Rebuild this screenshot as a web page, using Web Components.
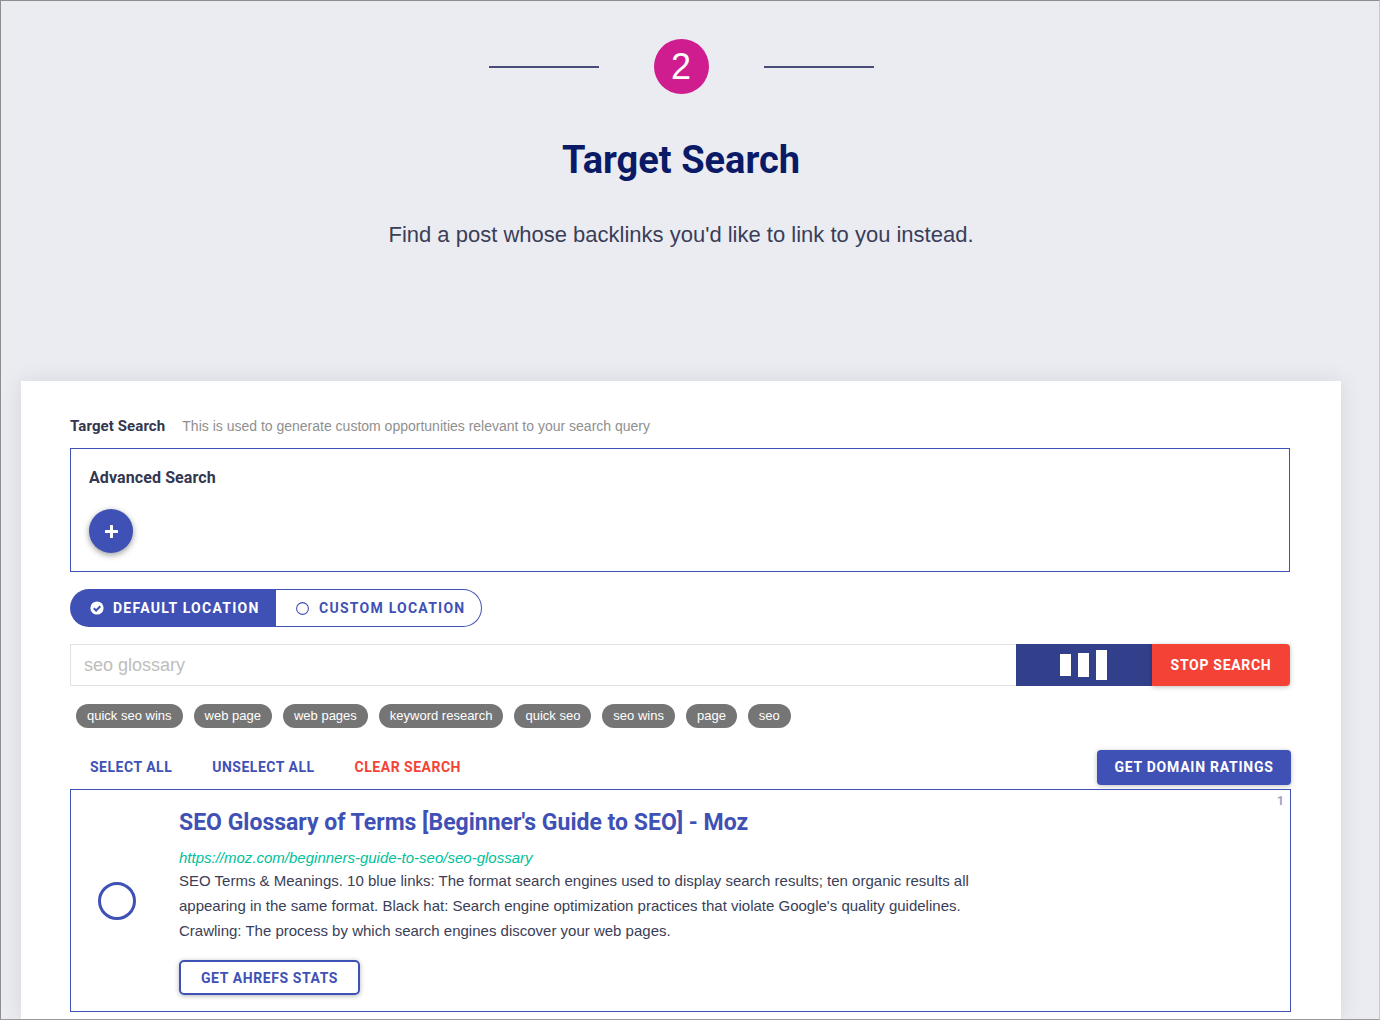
<!DOCTYPE html>
<html><head><meta charset="utf-8">
<style>
html,body{margin:0;padding:0;height:1020px;overflow:hidden;background:#ebecf1}
body{font-family:"Liberation Sans",Arial,sans-serif}
</style></head><body>
<app-frame>
  <step-header num="2" title="Target Search" sub="Find a post whose backlinks you'd like to link to you instead."></step-header>
  <main-card>
    <field-label name="Target Search" hint="This is used to generate custom opportunities relevant to your search query"></field-label>
    <advanced-box></advanced-box>
    <location-toggle></location-toggle>
    <search-row value="seo glossary"></search-row>
    <tag-list tags="quick seo wins|web page|web pages|keyword research|quick seo|seo wins|page|seo"></tag-list>
    <action-bar></action-bar>
    <result-card num="1" heading="SEO Glossary of Terms [Beginner's Guide to SEO] - Moz" url="https://moz.com/beginners-guide-to-seo/seo-glossary">SEO Terms &amp; Meanings. 10 blue links: The format search engines used to display search results; ten organic results all appearing in the same format. Black hat: Search engine optimization practices that violate Google's quality guidelines. Crawling: The process by which search engines discover your web pages.</result-card>
  </main-card>
</app-frame>
<script>
function def(name,css,html){
  customElements.define(name,class extends HTMLElement{
    connectedCallback(){
      if(this.shadowRoot)return;
      const s=this.attachShadow({mode:'open'});
      const a=n=>(this.getAttribute(n)||'');
      s.innerHTML='<style>'+css+'</style>'+(typeof html==='function'?html(a):html);
    }
  });
}
const esc=t=>t.replace(/&/g,'&amp;').replace(/</g,'&lt;');
def('app-frame',`:host{display:flex;flex-direction:column;box-sizing:border-box;width:1380px;height:1020px;overflow:hidden;background:#ebecf1;border:1px solid #8e8e8e;border-bottom-color:#9a9a9a;border-right-color:#c9cad0;padding:0 38px 0 20px}`,`<slot></slot>`);
def('step-header',`
:host{display:flex;flex-direction:column;align-items:center;height:380px;box-sizing:border-box;padding-top:38px;color:#3a3e58}
.top{display:flex;align-items:center;gap:55px;height:55px;margin-left:0}
.line{width:110px;height:2px;background:#474c78;margin-top:0}
.c{width:55px;height:55px;border-radius:50%;background:#cf1c8f;color:#fff;display:flex;align-items:center;justify-content:center;font:400 36px/1 "Liberation Sans",Arial,sans-serif}
h1{margin:44px 0 0;font:700 38px/44px Roboto,sans-serif;color:#0a1a66;letter-spacing:0}
p{margin:39px 0 0;font:400 22px/28px "Liberation Sans",Arial,sans-serif;color:#3a3e58}
`,a=>`<div class="top"><div class="line"></div><div class="c">${a('num')}</div><div class="line"></div></div><h1>${a('title')}</h1><p>${a('sub')}</p>`);
def('main-card',`:host{display:block;flex:1;background:#fff;padding:34px 51px 0 49px;box-shadow:0 0 22px rgba(0,0,0,.09);min-height:0}`,`<slot></slot>`);
def('field-label',`
:host{display:flex;align-items:baseline;gap:17px;height:33px;line-height:22px}
b{font:700 15px/22px Roboto,"Liberation Sans",sans-serif;color:#333750;letter-spacing:.1px}
span{font:400 14px/22px "Liberation Sans",Arial,sans-serif;color:#8f8f8f}
`,a=>`<b>${a('name')}</b><span>${a('hint')}</span>`);
def('advanced-box',`
:host{display:block;box-sizing:border-box;height:124px;border:1px solid #3f51b5;padding:18px 18px 0}
b{display:block;font:700 16px/22px "Roboto",sans-serif;color:#333750;letter-spacing:.1px}
.fab{width:44px;height:44px;border-radius:50%;background:#3f51b5;margin-top:20px;display:flex;align-items:center;justify-content:center;box-shadow:0 2px 6px rgba(0,0,0,.4)}
`,`<b>Advanced Search</b><div class="fab"><svg width="13" height="13" viewBox="0 0 13 13"><path d="M6.5 1v11M1 6.5h11" stroke="#fff" stroke-width="3" stroke-linecap="round"/></svg></div>`);
def('location-toggle',`
:host{display:flex;width:412px;height:38px;margin-top:17px;font:700 14px/1 Roboto,sans-serif;letter-spacing:1.25px}
div{display:flex;align-items:center;box-sizing:border-box}
.on{width:206px;background:#3f51b5;color:#fff;border-radius:19px 0 0 19px;padding-left:20px;gap:9px}
.off{flex:1;border:1px solid #3f51b5;border-left:0;color:#3f51b5;border-radius:0 19px 19px 0;padding-left:20px;gap:10px}
svg{display:block}
`,`<div class="on"><svg width="14" height="14" viewBox="0 0 14 14"><circle cx="7" cy="7" r="6.6" fill="#fff"/><path d="M3.8 7.2l2.3 2.3 4.2-4.3" fill="none" stroke="#3f51b5" stroke-width="2"/></svg>DEFAULT LOCATION</div><div class="off"><svg width="13" height="13" viewBox="0 0 13 13"><circle cx="6.5" cy="6.5" r="5.9" fill="none" stroke="#3f51b5" stroke-width="1.1"/></svg>CUSTOM LOCATION</div>`);
def('search-row',`
:host{display:flex;height:42px;margin-top:17px}
.in{flex:1;box-sizing:border-box;border:1px solid #e2e2e2;border-right:0;padding:0 13px;font:400 18px/40px "Liberation Sans",Arial,sans-serif;color:#bdbdbd}
.bars{width:136px;background:#32408c;display:flex;align-items:center;justify-content:center;gap:7px;padding-right:1px;box-sizing:border-box}
.bars i{display:block;width:11px;background:#fff}
.bars i:nth-child(1){height:22px;margin-top:0}
.bars i:nth-child(2){height:24px}
.bars i:nth-child(3){height:30px}
.stop{width:138px;background:#f44336;color:#fff;border-radius:0 4px 4px 0;display:flex;align-items:center;justify-content:center;font:700 14px/1 Roboto,sans-serif;letter-spacing:.7px;box-shadow:0 1px 5px rgba(0,0,0,.25);position:relative}
`,a=>`<div class="in">${a('value')}</div><div class="bars"><i></i><i></i><i></i></div><div class="stop">STOP SEARCH</div>`);
def('tag-list',`
:host{display:flex;gap:11px;margin-top:18px;padding-left:6px}
span{display:block;height:24px;box-sizing:border-box;padding:0 11px;border-radius:12px;background:#757575;color:#fff;font:400 13px/24px "Liberation Sans",Arial,sans-serif}
`,a=>a('tags').split('|').map(t=>`<span>${t}</span>`).join(''));
def('action-bar',`
:host{display:flex;align-items:center;height:36px;margin-top:21px;font:700 14px/1 Roboto,sans-serif;letter-spacing:.5px;padding-left:20px;margin-right:-1px}
a{color:#3f51b5;margin-right:40px}
a.r{color:#f44336}
.btn{margin-left:auto;height:35px;width:194px;display:flex;align-items:center;justify-content:center;background:#3f51b5;color:#fff;border-radius:4px;box-shadow:0 1px 5px rgba(0,0,0,.25);letter-spacing:.75px}
`,`<a>SELECT ALL</a><a>UNSELECT ALL</a><a class="r">CLEAR SEARCH</a><div class="btn">GET DOMAIN RATINGS</div>`);
def('result-card',`
:host{display:flex;box-sizing:border-box;height:223px;margin-top:4px;margin-right:-1px;border:1px solid #3f51b5;position:relative;color:#3a3e58}
.radio{width:108px;flex:none;display:flex;align-items:center;padding-left:27px;box-sizing:border-box;padding-bottom:0}
.body{width:812px}
h2{margin:19px 0 0;font:700 23px/28px Roboto,sans-serif;color:#3f51b5}
.u{margin-top:11px;font:italic 400 15px/20px "Liberation Sans",Arial,sans-serif;color:#00bf9a}
.t{font:400 15px/25px "Liberation Sans",Arial,sans-serif;margin-top:0;color:#3a3e58}
.b{display:flex;align-items:center;justify-content:center;box-sizing:border-box;width:181px;height:35px;margin-top:17px;border:2px solid #3f51b5;border-radius:5px;color:#3f51b5;font:700 14px/1 Roboto,sans-serif;letter-spacing:.6px;box-shadow:0 1px 5px rgba(0,0,0,.3)}
.n{position:absolute;top:5px;right:6px;font:700 12px/1 Roboto,sans-serif;color:#9a9fc6}
`,a=>`<div class="radio"><svg width="38" height="38" viewBox="0 0 38 38"><circle cx="19" cy="19" r="17.5" fill="none" stroke="#3f51b5" stroke-width="3"/></svg></div><div class="body"><h2>${esc(a('heading'))}</h2><div class="u">${a('url')}</div><div class="t"><slot></slot></div><div class="b">GET AHREFS STATS</div></div><div class="n">${a('num')}</div>`);
</script>
</body></html>
